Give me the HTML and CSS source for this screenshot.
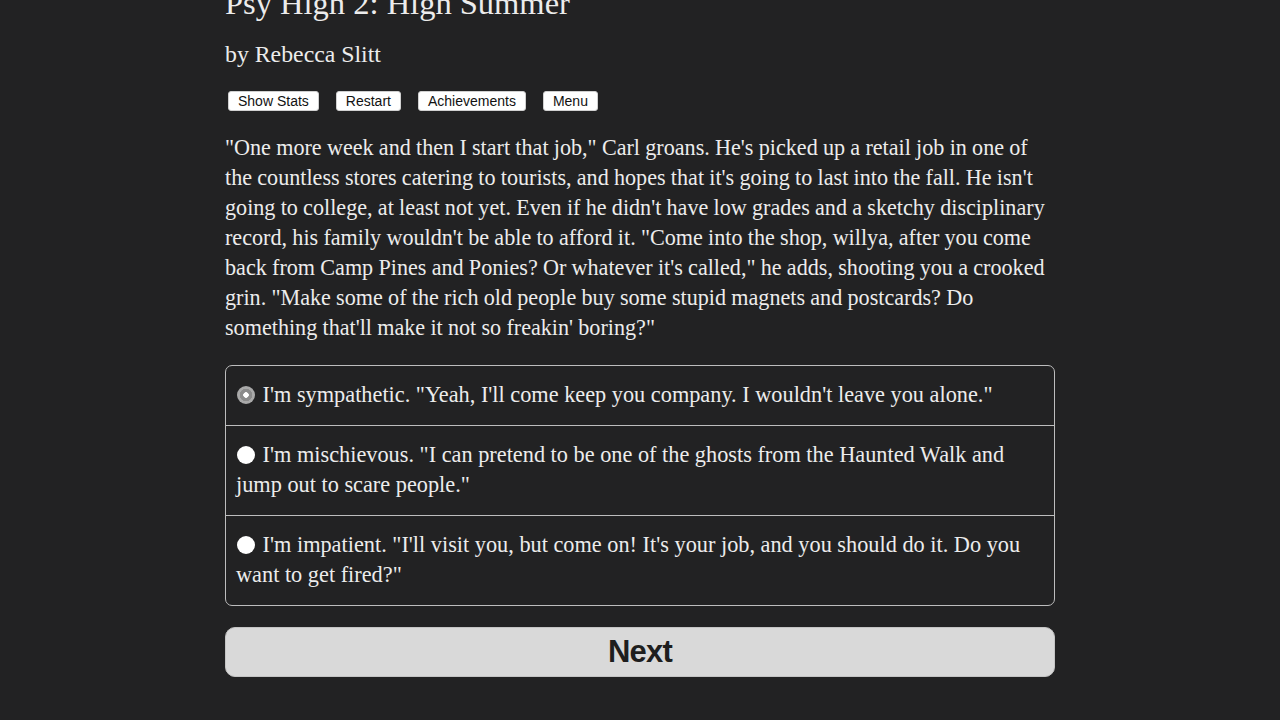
FILE: index.html
```html
<!DOCTYPE html>
<html lang="en">
<head>
<meta charset="utf-8">
<title>Psy High 2: High Summer</title>
<link rel="stylesheet" href="styles.css">
</head>
<body>
<main class="page">
  <h1 class="title">Psy High 2: High Summer</h1>
  <h2 class="author">by Rebecca Slitt</h2>
  <nav class="toolbar">
    <button class="tool-btn" type="button">Show Stats</button>
    <button class="tool-btn" type="button">Restart</button>
    <button class="tool-btn" type="button">Achievements</button>
    <button class="tool-btn" type="button">Menu</button>
  </nav>
  <p class="story">"One more week and then I start that job," Carl groans. He's picked up a retail job in one of the countless stores catering to tourists, and hopes that it's going to last into the fall. He isn't going to college, at least not yet. Even if he didn't have low grades and a sketchy disciplinary record, his family wouldn't be able to afford it. "Come into the shop, willya, after you come back from Camp Pines and Ponies? Or whatever it's called," he adds, shooting you a crooked grin. "Make some of the rich old people buy some stupid magnets and postcards? Do something that'll make it not so freakin' boring?"</p>
  <form class="choices">
    <label class="choice"><input class="radio" type="radio" name="choice" checked> I'm sympathetic. "Yeah, I'll come keep you company. I wouldn't leave you alone."</label>
    <label class="choice"><input class="radio" type="radio" name="choice"> I'm mischievous. "I can pretend to be one of the ghosts from the Haunted Walk and jump out to scare people."</label>
    <label class="choice"><input class="radio" type="radio" name="choice"> I'm impatient. "I'll visit you, but come on! It's your job, and you should do it. Do you want to get fired?"</label>
  </form>
  <button class="next-btn" type="button">Next</button>
</main>
</body>
</html>
```
FILE: styles.css
```css
html, body {
  margin: 0;
  padding: 0;
  background: #222223;
  height: 100%;
  overflow: hidden;
}

.page {
  width: 830px;
  margin: 0 auto;
  color: #ececec;
  font-family: "Liberation Serif", "Times New Roman", serif;
}

.title {
  margin: -15px 0 0 0;
  font-size: 32.5px;
  line-height: 36px;
  font-weight: normal;
}

.author {
  margin: 19px 0 0 0;
  font-size: 23.8px;
  line-height: 28px;
  font-weight: normal;
}

.toolbar {
  display: flex;
  gap: 17px;
  margin: 23px 0 0 3px;
}

.tool-btn {
  font-family: "Liberation Sans", Arial, sans-serif;
  font-size: 14px;
  line-height: 18px;
  height: 20px;
  padding: 0 9px;
  background: #ffffff;
  color: #111;
  border: 1px solid #d0d0d0;
  border-radius: 3px;
}

.story {
  margin: 22px 0 0 0;
  font-size: 22.15px;
  line-height: 30px;
  word-spacing: -0.3px;
}

.choices {
  margin: 22px 0 0 0;
  border: 1px solid #bdbdbd;
  border-radius: 7px;
  overflow: hidden;
}

.choice {
  display: block;
  padding: 14px 10px 15px 10px;
  font-size: 22.3px;
  line-height: 30px;
  border-top: 1px solid #bdbdbd;
}

.choice:first-child {
  border-top: none;
}

.radio {
  appearance: none;
  -webkit-appearance: none;
  width: 18px;
  height: 18px;
  margin: 0 2px 0 1px;
  border-radius: 50%;
  background: #ffffff;
  vertical-align: -2px;
}

.radio:checked {
  background: radial-gradient(circle, #ffffff 0 2.5px, #8a8a8a 3px 6px, #a9a9a9 6.5px);
}

.next-btn {
  display: block;
  width: 100%;
  height: 50px;
  margin: 21px 0 0 0;
  background: #d9d9d9;
  color: #1e1e1e;
  border: 1px solid #c4c4c4;
  border-radius: 10px;
  font-family: "Liberation Sans", Arial, sans-serif;
  font-weight: bold;
  font-size: 31px;
  letter-spacing: -0.8px;
}
```
